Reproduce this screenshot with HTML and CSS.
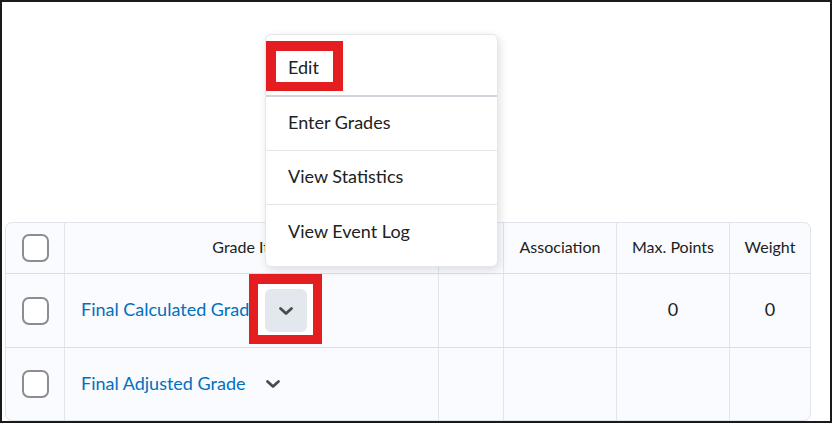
FILE: index.html
```html
<!DOCTYPE html>
<html lang="en">
<head>
    <meta charset="UTF-8">
    <meta name="viewport" content="width=device-width, initial-scale=1.0">
    <title>Grades</title>
    <link rel="stylesheet" href="styles.css">
</head>
<body>
    <div class="frame">
        <table class="grades">
            <colgroup>
                <col class="col-check">
                <col class="col-item">
                <col class="col-blank">
                <col class="col-assoc">
                <col class="col-points">
                <col class="col-weight">
            </colgroup>
            <thead>
                <tr>
                    <th><span class="checkbox"></span></th>
                    <th class="label">Grade Item</th>
                    <th></th>
                    <th class="label">Association</th>
                    <th class="label">Max. Points</th>
                    <th class="label">Weight</th>
                </tr>
            </thead>
            <tbody>
                <tr class="row-calc">
                    <td><span class="checkbox"></span></td>
                    <td class="item">
                        <a href="#">Final Calculated Grade</a>
                        <button class="menu-btn active" type="button">
                            <svg width="16" height="10" viewBox="0 0 16 10"><path d="M2.5 2.5 L8 7.5 L13.5 2.5" fill="none" stroke="#494c4e" stroke-width="2.8" stroke-linecap="round" stroke-linejoin="round"/></svg>
                        </button>
                    </td>
                    <td></td>
                    <td></td>
                    <td class="num">0</td>
                    <td class="num">0</td>
                </tr>
                <tr class="row-adj">
                    <td><span class="checkbox"></span></td>
                    <td class="item">
                        <a href="#">Final Adjusted Grade</a>
                        <button class="menu-btn" type="button">
                            <svg width="16" height="10" viewBox="0 0 16 10"><path d="M2.5 2.5 L8 7.5 L13.5 2.5" fill="none" stroke="#494c4e" stroke-width="2.8" stroke-linecap="round" stroke-linejoin="round"/></svg>
                        </button>
                    </td>
                    <td></td>
                    <td></td>
                    <td></td>
                    <td></td>
                </tr>
            </tbody>
        </table>

        <!-- context menu opened from the first row -->
        <ul class="menu">
            <li class="first">Edit</li>
            <li>Enter Grades</li>
            <li>View Statistics</li>
            <li class="last">View Event Log</li>
        </ul>

        <div class="highlight hl-edit"></div>
        <div class="highlight hl-btn"></div>
    </div>
</body>
</html>
```

FILE: styles.css
```css
body {
    margin: 0;
    padding: 0;
    background-color: #fff;
    font-family: Lato, "Open Sans", sans-serif;
    color: #202122;
}
.frame {
    position: relative;
    width: 832px;
    height: 423px;
    box-sizing: border-box;
    border: 2px solid #1a1a1a;
    padding: 220px 0 0 3px;
    overflow: hidden;
}
.grades {
    width: 806px;
    border-collapse: separate;
    border-spacing: 0;
    table-layout: fixed;
    background-color: #f9fbfe;
    border: 1px solid #dfe4ea;
    border-radius: 7px;
}
.col-check { width: 58px; }
.col-item { width: 374px; }
.col-blank { width: 65px; }
.col-assoc { width: 113px; }
.col-points { width: 113px; }
.col-weight { width: 81px; }
th, td {
    padding: 0;
    border-left: 1px solid #e1e6ec;
    border-bottom: 1px solid #d9dfe5;
    text-align: center;
    vertical-align: middle;
}
th:first-child, td:first-child {
    border-left: none;
}
th {
    height: 47px;
    font-size: 16px;
    font-weight: normal;
    color: #202122;
}
th.label, td.num, td.item {
    padding-bottom: 3px;
}
.row-calc td {
    height: 70px;
}
.row-adj td {
    height: 69px;
    border-bottom: none;
}
.num {
    font-size: 18px;
}
.checkbox {
    display: inline-block;
    width: 23px;
    height: 24px;
    border: 2px solid #8a8e92;
    border-radius: 7px;
    background-color: #fff;
    vertical-align: middle;
}
.item {
    text-align: left;
    padding-left: 16px;
    white-space: nowrap;
}
.item a {
    color: #0070c0;
    text-decoration: none;
    font-size: 18px;
    vertical-align: middle;
}
.menu-btn {
    position: relative;
    z-index: 2;
    display: inline-flex;
    align-items: center;
    justify-content: center;
    width: 42px;
    height: 43px;
    margin: 3px 0 0 2px;
    padding: 0;
    border: none;
    border-radius: 6px;
    background: transparent;
    vertical-align: middle;
}
.menu-btn.active {
    background-color: #e3e8ef;
    margin-left: 2px;
}
.menu {
    position: absolute;
    left: 263px;
    top: 32px;
    width: 231px;
    margin: 0;
    padding: 0;
    list-style-type: none;
    background-color: #fff;
    border: 1px solid #e3e7ec;
    border-radius: 6px;
    box-shadow: 2px 3px 10px rgba(0, 0, 0, 0.12);
    z-index: 3;
}
.menu li {
    display: flex;
    align-items: center;
    height: 50px;
    padding: 0 0 3px 22px;
    font-size: 18px;
    border-bottom: 1px solid #e3e7ec;
}
.menu li.first {
    height: 57px;
    padding: 3px 0 0 22px;
    border-bottom: 2px solid #cfd5db;
}
.menu li.last {
    height: 52px;
    padding: 0 0 9px 22px;
    border-bottom: none;
}
.highlight {
    position: absolute;
    box-sizing: border-box;
    border: 10px solid #e41e20;
    z-index: 4;
}
.hl-edit {
    left: 264px;
    top: 39px;
    width: 77px;
    height: 50px;
    border-bottom-width: 9px;
}
.hl-btn {
    left: 247px;
    top: 272px;
    width: 73px;
    height: 70px;
    border-width: 10px 9px 9px 9px;
    background-color: #fff;
    z-index: 1;
}
```
